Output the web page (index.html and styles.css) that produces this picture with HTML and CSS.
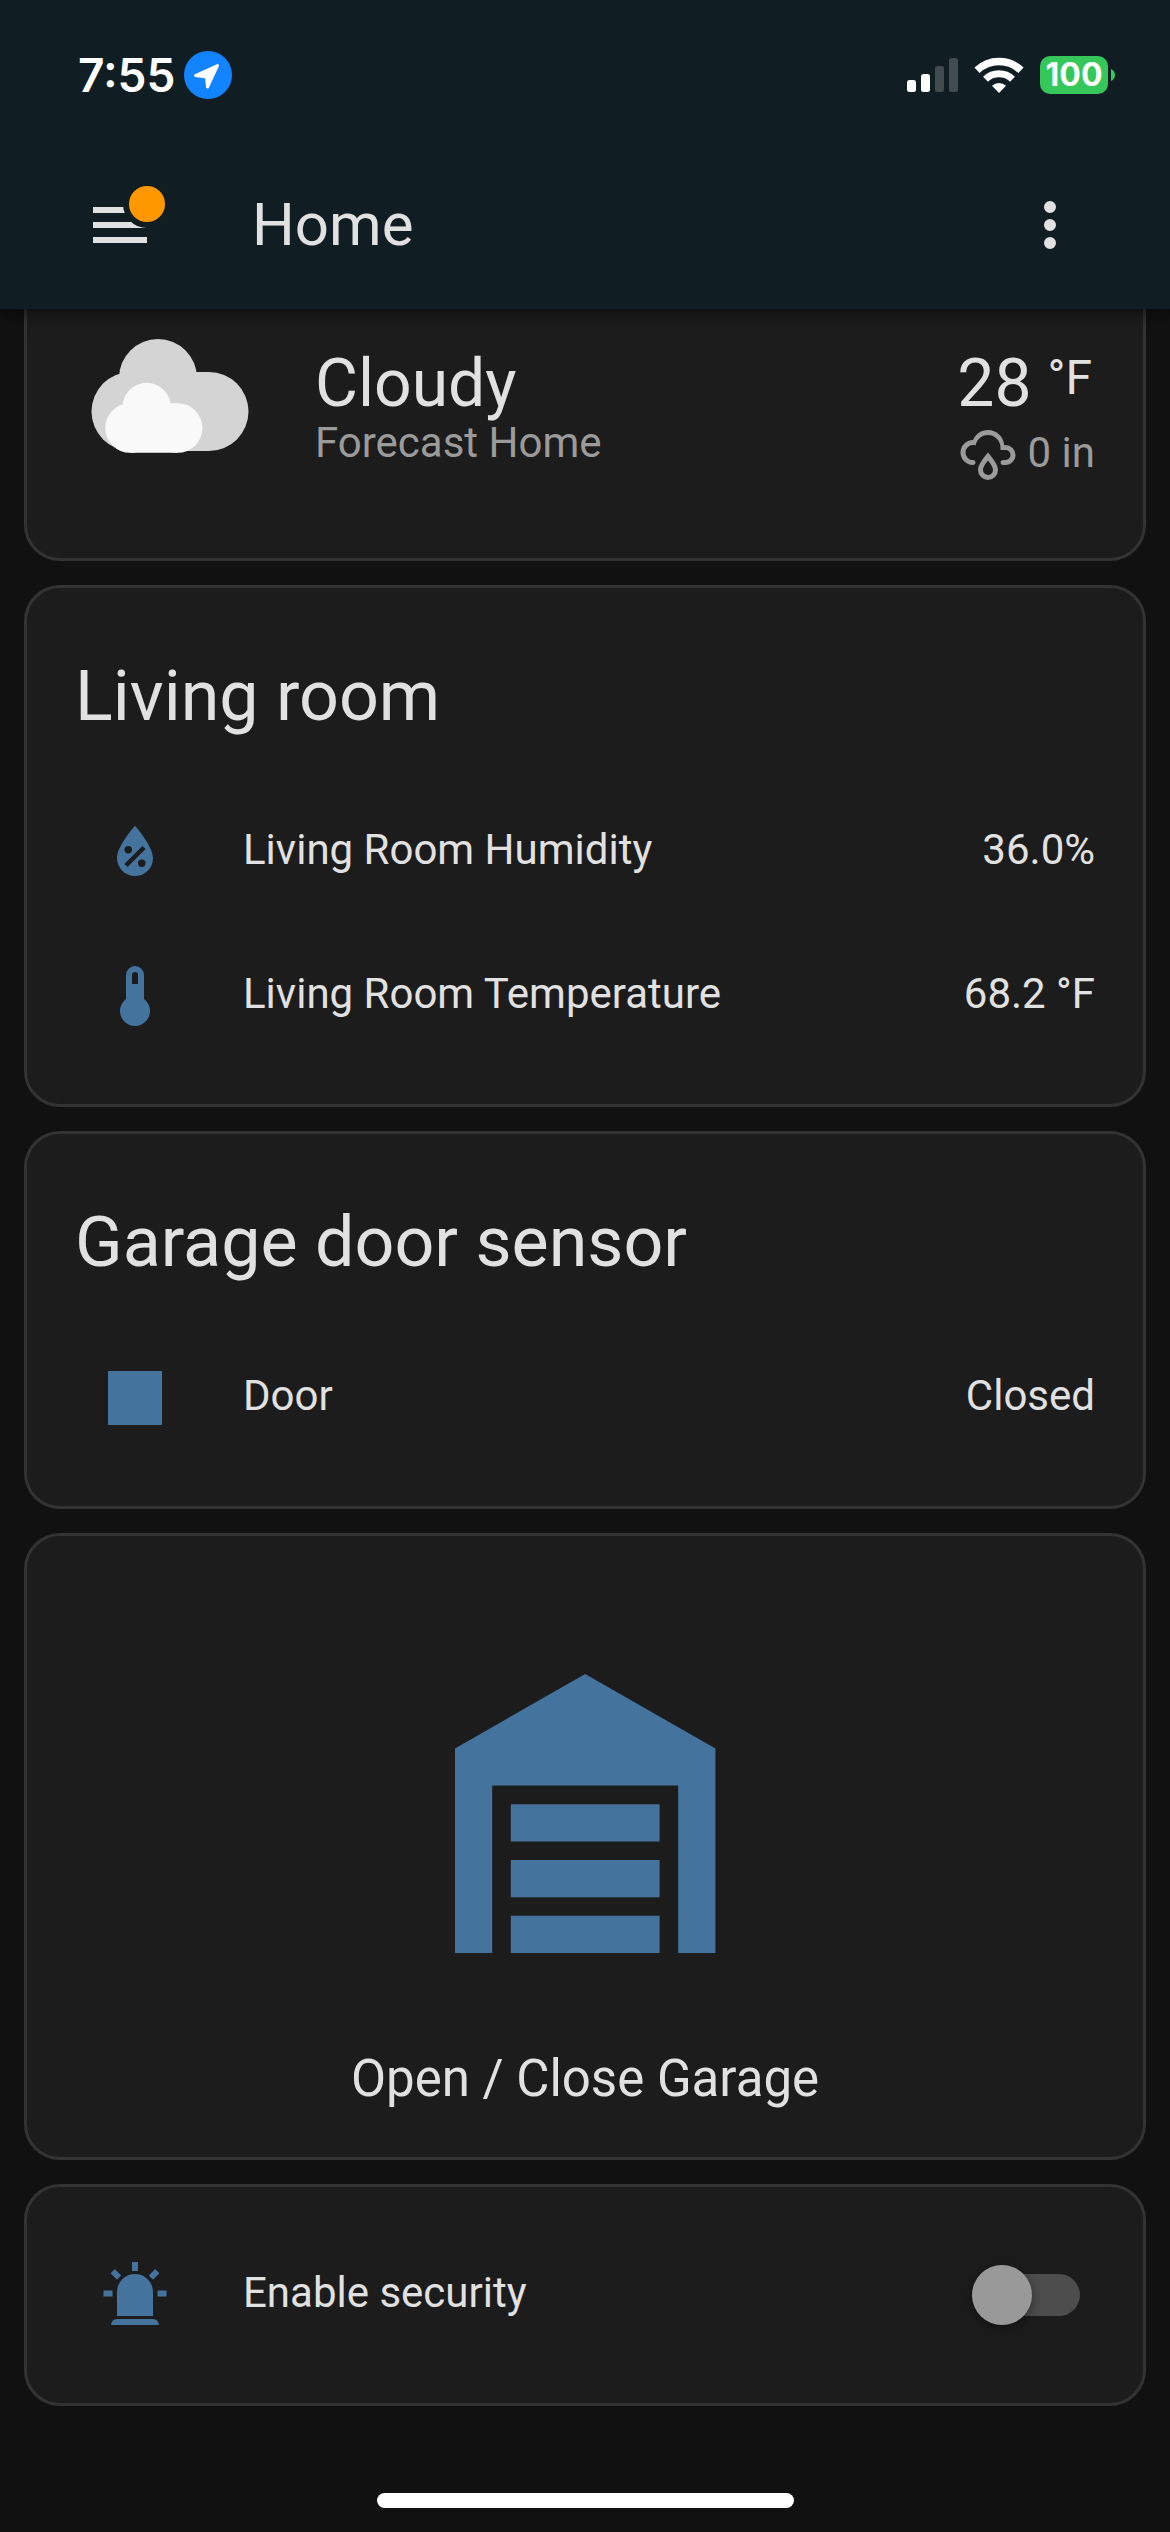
FILE: index.html
```html
<!DOCTYPE html>
<html lang="en">
<head>
<meta charset="utf-8">
<meta name="viewport" content="width=device-width">
<title>Home</title>
<link rel="stylesheet" href="styles.css">
</head>
<body>
<header class="header">
  <div class="status">
    <div class="status-side">
      <span class="clock">7:55</span>
      <svg class="location" viewBox="0 0 48 48" aria-label="Location in use"><circle cx="24" cy="24" r="24" fill="#1284ff"/><path d="M33.500 14.500L23.500 36L22.500 26L11.500 24.500Z" fill="#fff" stroke="#fff" stroke-width="3" stroke-linejoin="round"/></svg>
    </div>
    <div class="status-side">
      <svg class="signal" viewBox="0 0 51 34" aria-label="Signal"><g fill="#fff"><rect y="22" width="9" height="12" rx="2.500"/><rect x="14" y="16" width="9" height="18" rx="2.500"/></g><g fill="#414b50"><rect x="28" y="8" width="9" height="26" rx="2.500"/><rect x="42" width="9" height="34" rx="2.500"/></g></svg>
      <svg class="wifi" viewBox="0 0 50 36" aria-label="Wi-Fi"><g fill="none" stroke="#fff"><path d="M3 13.300A32 32 0 0 1 47 13.300" stroke-width="7.500"/><path d="M11.500 22.200A19.500 19.500 0 0 1 38.500 22.200" stroke-width="7"/></g><path d="M25 36L18 28.800A10 10 0 0 1 32 28.800Z" fill="#fff"/></svg>
      <div class="battery"><span class="battery-level">100</span><svg class="battery-tip" viewBox="0 0 4 12"><path d="M0 0Q4 2 4 6T0 12Z" fill="#35c759"/></svg></div>
    </div>
  </div>
  <div class="toolbar">
    <button class="icon-button menu" aria-label="Menu"><svg class="icon" viewBox="0 0 24 24"><path d="M3,6H21V8H3V6M3,11H21V13H3V11M3,16H21V18H3V16Z"/></svg><span class="dot"></span></button>
    <h1 class="title">Home</h1>
    <button class="icon-button" aria-label="More"><svg class="icon" viewBox="0 0 24 24"><path d="M12,16A2,2 0 0,1 14,18A2,2 0 0,1 12,20A2,2 0 0,1 10,18A2,2 0 0,1 12,16M12,10A2,2 0 0,1 14,12A2,2 0 0,1 12,14A2,2 0 0,1 10,12A2,2 0 0,1 12,10M12,4A2,2 0 0,1 14,6A2,2 0 0,1 12,8A2,2 0 0,1 10,6A2,2 0 0,1 12,4Z"/></svg></button>
  </div>
</header>

<main class="dashboard">
  <section class="card weather">
    <svg class="weather-icon" viewBox="91 339 158 114">
      <g fill="#d4d4d4"><circle cx="158" cy="378" r="39"/><circle cx="131" cy="411.500" r="39.500"/><circle cx="209" cy="411.500" r="39.500"/><path d="M131 385H196V372H209V451H131Z"/></g>
      <g fill="#f9f9f9"><circle cx="146.700" cy="407" r="24.200"/><circle cx="130" cy="428" r="24.800"/><circle cx="177.700" cy="428" r="24.800"/><path d="M130 410H168V403.200H177.700V452.800H130Z"/></g>
    </svg>
    <div class="weather-info">
      <div class="weather-state">Cloudy</div>
      <div class="weather-name">Forecast Home</div>
    </div>
    <div class="weather-values">
      <div class="temperature"><span>28</span><span class="unit">°F</span></div>
      <div class="rain"><svg class="rain-icon" viewBox="0 0 24 24"><path d="M6,14.030A1,1 0 0,1 7,15.030C7,15.580 6.550,16.030 6,16.030C3.240,16.030 1,13.790 1,11.030C1,8.270 3.240,6.030 6,6.030C7,3.680 9.300,2.030 12,2.030C15.430,2.030 18.240,4.690 18.500,8.060L19,8.030A4,4 0 0,1 23,12.030C23,14.230 21.210,16.030 19,16.030H18C17.450,16.030 17,15.580 17,15.030C17,14.470 17.450,14.030 18,14.030H19A2,2 0 0,0 21,12.030A2,2 0 0,0 19,10.030H17V9.030C17,6.270 14.760,4.030 12,4.030C9.500,4.030 7.450,5.840 7.060,8.210C6.730,8.090 6.370,8.030 6,8.030A3,3 0 0,0 3,11.030A3,3 0 0,0 6,14.030M12,14.150C12.180,14.390 12.370,14.660 12.560,14.940C13,15.560 14,17.030 14,18C14,19.110 13.100,20 12,20A2,2 0 0,1 10,18C10,17.030 11,15.560 11.440,14.940C11.630,14.660 11.820,14.400 12,14.150M12,11.030L11.500,11.590C11.500,11.590 10.650,12.550 9.790,13.810C8.930,15.060 8,16.560 8,18A4,4 0 0,0 12,22A4,4 0 0,0 16,18C16,16.560 15.070,15.060 14.210,13.810C13.350,12.550 12.500,11.590 12.500,11.590"/></svg><span>0 in</span></div>
    </div>
  </section>

  <section class="card">
    <h2 class="card-title">Living room</h2>
    <div class="rows">
      <div class="row">
        <span class="row-icon"><svg class="icon" viewBox="0 0 24 24"><path d="M12,3.250C12,3.250 6,10 6,14C6,17.320 8.690,20 12,20A6,6 0 0,0 18,14C18,10 12,3.250 12,3.250M14.470,9.970L15.530,11.030L9.530,17.030L8.470,15.970M9.750,10A1.250,1.250 0 0,1 11,11.250A1.250,1.250 0 0,1 9.750,12.500A1.250,1.250 0 0,1 8.500,11.250A1.250,1.250 0 0,1 9.750,10M14.250,14.500A1.250,1.250 0 0,1 15.500,15.750A1.250,1.250 0 0,1 14.250,17A1.250,1.250 0 0,1 13,15.750A1.250,1.250 0 0,1 14.250,14.500Z"/></svg></span>
        <span class="row-name">Living Room Humidity</span>
        <span class="row-value">36.0%</span>
      </div>
      <div class="row">
        <span class="row-icon"><svg class="icon" viewBox="0 0 24 24"><path d="M15 13V5A3 3 0 0 0 9 5V13A5 5 0 1 0 15 13M12 4A1 1 0 0 1 13 5V8H11V5A1 1 0 0 1 12 4Z"/></svg></span>
        <span class="row-name">Living Room Temperature</span>
        <span class="row-value">68.2 °F</span>
      </div>
    </div>
  </section>

  <section class="card">
    <h2 class="card-title">Garage door sensor</h2>
    <div class="rows">
      <div class="row">
        <span class="row-icon"><svg class="icon" viewBox="0 0 24 24"><path d="M3,3V21H21V3"/></svg></span>
        <span class="row-name">Door</span>
        <span class="row-value">Closed</span>
      </div>
    </div>
  </section>

  <button class="card garage">
    <svg class="garage-icon" viewBox="0 0 24 24"><path d="M19,20H17V11H7V20H5V9L12,5L19,9V20M8,12H16V14H8V12M8,15H16V17H8V15M8,18H16V20H8V18Z"/></svg>
    <span class="garage-name">Open / Close Garage</span>
  </button>

  <section class="card">
    <div class="rows">
      <div class="row">
        <span class="row-icon"><svg class="icon" viewBox="0 0 24 24"><path d="M6,6.900L3.870,4.780L5.280,3.370L7.400,5.500L6,6.900M13,1V4H11V1H13M20.130,4.780L18,6.900L16.600,5.500L18.720,3.370L20.130,4.780M4.500,10.500V12.500H1.500V10.500H4.500M19.500,10.500H22.500V12.500H19.500V10.500M6,20H18A2,2 0 0,1 20,22H4A2,2 0 0,1 6,20M12,5A6,6 0 0,1 18,11V19H6V11A6,6 0 0,1 12,5Z"/></svg></span>
        <label class="row-name" for="security">Enable security</label>
        <input class="switch" type="checkbox" role="switch" id="security">
      </div>
    </div>
  </section>
</main>
<div class="home-indicator"></div>
</body>
</html>
```
FILE: styles.css
```css
* {
  box-sizing: border-box;
}

body {
  margin: 0;
  min-height: 100vh;
  display: flex;
  flex-direction: column;
  background: #111;
  color: #e1e1e1;
  font-family: Roboto, sans-serif;
  font-size: 42px;
}

svg {
  display: block;
  flex: none;
  fill: currentColor;
}

button {
  font: inherit;
  color: inherit;
}

/* Header */
.header {
  position: sticky;
  top: 0;
  z-index: 1;
  background: #101e24;
  box-shadow: 0 4px 16px rgba(0, 0, 0, 0.6);
}

.status {
  height: 141px;
  padding: 8px 55px 0 78px;
  display: flex;
  align-items: center;
  justify-content: space-between;
  color: #fff;
  font-family: Inter, sans-serif;
}

.status-side {
  display: flex;
  align-items: center;
}

.clock {
  font-size: 46px;
  font-weight: 600;
  line-height: 48px;
}

.location {
  width: 48px;
  height: 48px;
  margin-left: 9px;
}

.signal {
  width: 51px;
  height: 34px;
}

.wifi {
  width: 50px;
  height: 36px;
  margin: 0 16px;
}

.battery {
  display: flex;
  align-items: center;
  gap: 3px;
}

.battery-level {
  width: 68px;
  border-radius: 10px;
  background: #35c759;
  font-size: 32px;
  font-weight: 700;
  line-height: 38px;
  text-align: center;
}

.battery-tip {
  width: 4px;
  height: 12px;
}

.toolbar {
  height: 168px;
  padding: 0 48px;
  display: flex;
  align-items: center;
}

.icon-button {
  width: 144px;
  height: 144px;
  padding: 0;
  border: 0;
  background: none;
  display: flex;
  align-items: center;
  justify-content: center;
}

.menu {
  position: relative;
}

.dot {
  position: absolute;
  top: 27px;
  right: 21px;
  width: 48px;
  height: 48px;
  border: 6px solid #101e24;
  border-radius: 50%;
  background: #ff9800;
}

.icon {
  width: 72px;
  height: 72px;
}

.title {
  flex: 1;
  margin: 0 0 0 60px;
  font-size: 60px;
  font-weight: 400;
  line-height: 60px;
}

/* Cards */
.dashboard {
  flex: 1;
  margin-top: -48px;
  padding: 0 24px 24px;
  display: flex;
  flex-direction: column;
  gap: 24px;
}

.card {
  border: 3px solid #333;
  border-radius: 36px;
  background: #1c1c1c;
}

.card-title {
  margin: 0;
  padding: 36px 48px 0;
  font-size: 70px;
  font-weight: 400;
  line-height: 144px;
}

.card-title + .rows {
  padding-top: 24px;
}

.rows {
  padding: 48px;
  display: flex;
  flex-direction: column;
  gap: 24px;
}

.row {
  height: 120px;
  display: flex;
  align-items: center;
}

.row-icon {
  width: 120px;
  display: flex;
  justify-content: center;
  color: #44739e;
}

.row-name {
  flex: 1;
  padding: 0 0 6px 48px;
}

.row-value {
  padding-bottom: 6px;
}

.switch {
  appearance: none;
  width: 108px;
  height: 42px;
  margin: 0 15px 0 0;
  border-radius: 21px;
  background: #4d4d4d;
  display: flex;
  align-items: center;
}

.switch::before {
  content: "";
  width: 60px;
  height: 60px;
  flex: none;
  border-radius: 50%;
  background: #999;
  box-shadow: 0 3px 12px rgba(0, 0, 0, 0.4);
}

.switch:checked {
  justify-content: flex-end;
}

/* Weather */
.weather {
  padding: 75px 48px 73px;
  display: flex;
  align-items: flex-start;
}

.weather-icon {
  width: 158px;
  height: 114px;
  margin-left: 16px;
}

.weather-info {
  flex: 1;
  padding: 12px 0 0 66px;
}

.weather-state {
  font-size: 66px;
  line-height: 66px;
}

.weather-name {
  color: #9b9b9b;
  line-height: 52px;
}

.weather-values {
  padding-top: 12px;
}

.temperature {
  display: flex;
  justify-content: flex-end;
  gap: 16px;
  padding-right: 3px;
  font-size: 66px;
  line-height: 66px;
}

.unit {
  font-size: 48px;
  line-height: 54px;
}

.rain {
  margin-top: 8px;
  display: flex;
  justify-content: flex-end;
  gap: 10px;
  color: #9b9b9b;
  line-height: 56px;
}

.rain-icon {
  width: 60px;
  height: 60px;
}

/* Garage button */
.garage {
  padding: 45px 0 48px;
  display: flex;
  flex-direction: column;
  align-items: center;
}

.garage-icon {
  width: 40%;
  color: #44739e;
}

.garage-name {
  margin-top: 22px;
  font-size: 51px;
  line-height: 60px;
}

.home-indicator {
  width: 417px;
  height: 15px;
  margin: 0 auto 24px;
  border-radius: 8px;
  background: #fff;
}
```
